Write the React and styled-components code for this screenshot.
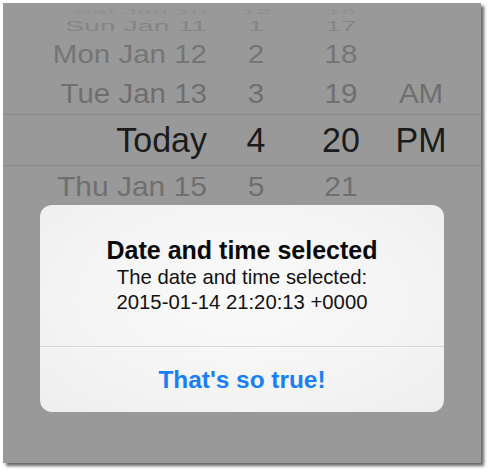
import React from "react";
import styled, { createGlobalStyle } from "styled-components";

const Global = createGlobalStyle`
  html, body { margin: 0; padding: 0; background: #ffffff; }
  body { font-family: "Liberation Sans", Arial, sans-serif; }
`;

const Page = styled.div`
  padding: 3px;
  width: 492px;
  height: 473px;
  box-sizing: border-box;
  background: #ffffff;
`;

const Screen = styled.div`
  position: relative;
  width: 478px;
  height: 460px;
  background: #999999;
  box-shadow: 3px 3px 3px rgba(0, 0, 0, 0.6);
  overflow: hidden;
`;

const Picker = styled.div`
  display: flex;
  flex-direction: column;
`;

const Row = styled.div`
  display: grid;
  grid-template-columns: 204px 98px 72px 88px 1fr;
  align-items: center;
  height: ${(p) => p.$h}px;
  line-height: ${(p) => p.$h - (p.$selected ? 2 : 0)}px;
  color: ${(p) => p.$color};
  font-size: ${(p) => p.$size}px;
  box-sizing: border-box;
  border-top: ${(p) => (p.$selected ? "1px solid #8b8b8b" : "none")};
  border-bottom: ${(p) => (p.$selected ? "1px solid #8b8b8b" : "none")};
`;

const Cell = styled.div`
  text-align: ${(p) => (p.$right ? "right" : "center")};
  white-space: nowrap;
`;

const Squash = styled.span`
  display: inline-block;
  transform: scaleY(${(p) => p.$sy});
  transform-origin: center;
`;

const Alert = styled.div`
  position: absolute;
  left: 37px;
  top: 202px;
  width: 404px;
  height: 207px;
  border-radius: 12px;
  background: radial-gradient(ellipse at 50% 45%, #fafafa 0%, #f4f4f4 60%, #eeeeee 100%);
  display: flex;
  flex-direction: column;
  overflow: hidden;
`;

const AlertBody = styled.div`
  padding: 30px 16px 31px;
  text-align: center;
  color: #111111;
  border-bottom: 1px solid #d6d6d6;
`;

const Title = styled.div`
  font-size: 25px;
  font-weight: bold;
  line-height: 30px;
  color: #0a0a0a;
`;

const Message = styled.div`
  font-size: 20.3px;
  line-height: 25px;
`;

const Button = styled.div`
  flex: 1;
  display: flex;
  align-items: center;
  justify-content: center;
  font-size: 24.4px;
  font-weight: bold;
  color: #1a7ef6;
`;

const rows = [
  { h: 12, size: 28, sy: 0.28, color: "#909090", d: "Sat Jan 10", hr: "12", mn: "16", ap: "" },
  { h: 22, size: 28.5, sy: 0.49, color: "#858585", d: "Sun Jan 11", hr: "1", mn: "17", ap: "" },
  { h: 35, size: 29.5, sy: 0.85, color: "#757575", d: "Mon Jan 12", hr: "2", mn: "18", ap: "" },
  { h: 42, size: 29.5, sy: 0.96, color: "#6f6f6f", d: "Tue Jan 13", hr: "3", mn: "19", ap: "AM" },
  { h: 52, size: 34, sy: 1.03, color: "#1b1b1b", d: "Today", hr: "4", mn: "20", ap: "PM", selected: true },
  { h: 42, size: 30, sy: 0.93, color: "#6f6f6f", d: "Thu Jan 15", hr: "5", mn: "21", ap: "" },
];

export default function App() {
  return (
    <>
      <Global />
      <Page>
        <Screen>
          <Picker>
            {rows.map((r) => (
              <Row key={r.d} $h={r.h} $size={r.size} $color={r.color} $selected={r.selected}>
                <Cell $right>
                  <Squash $sy={r.sy}>{r.d}</Squash>
                </Cell>
                <Cell>
                  <Squash $sy={r.sy}>{r.hr}</Squash>
                </Cell>
                <Cell>
                  <Squash $sy={r.sy}>{r.mn}</Squash>
                </Cell>
                <Cell>
                  <Squash $sy={r.sy}>{r.ap}</Squash>
                </Cell>
                <Cell />
              </Row>
            ))}
          </Picker>
          <Alert>
            <AlertBody>
              <Title>Date and time selected</Title>
              <Message>The date and time selected:</Message>
              <Message>2015-01-14 21:20:13 +0000</Message>
            </AlertBody>
            <Button>That's so true!</Button>
          </Alert>
        </Screen>
      </Page>
    </>
  );
}
